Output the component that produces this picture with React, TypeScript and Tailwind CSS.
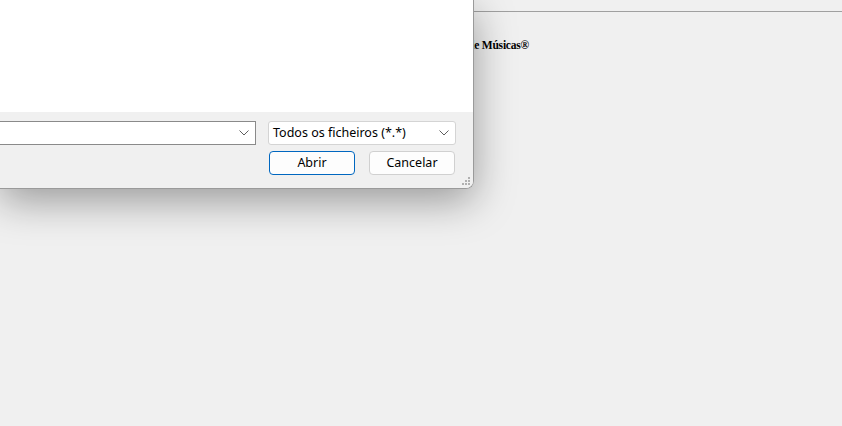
import React from 'react';

const Chevron: React.FC = () => (
  <svg width="10" height="6" viewBox="0 0 10 6" fill="none" className="text-[#5f5f5f]">
    <path d="M0.5 0.5L5 5L9.5 0.5" stroke="currentColor" strokeWidth="1" />
  </svg>
);

const Grip: React.FC = () => (
  <svg width="10" height="10" viewBox="0 0 10 10" className="text-[#b0b0b0]">
    <rect x="7" y="1" width="2" height="2" fill="currentColor" />
    <rect x="4" y="4" width="2" height="2" fill="currentColor" />
    <rect x="7" y="4" width="2" height="2" fill="currentColor" />
    <rect x="1" y="7" width="2" height="2" fill="currentColor" />
    <rect x="4" y="7" width="2" height="2" fill="currentColor" />
    <rect x="7" y="7" width="2" height="2" fill="currentColor" />
  </svg>
);

export default function App() {
  return (
    <div className="relative w-[842px] h-[426px] overflow-hidden bg-[#f0f0f0]">
      {/* page behind the dialog */}
      <div className="flex flex-col">
        <div className="h-[12px] border-b border-[#a0a0a0]" />
        <div className="flex justify-end w-[529px] pt-[26px]">
          <span className="font-['Liberation_Serif',serif] font-bold text-[11.5px] leading-[15px] tracking-[-0.2px] text-black">
            Gestor de Músicas®
          </span>
        </div>
      </div>

      {/* open file dialog */}
      <div className="absolute left-0 top-0 w-[474px] h-[189px] flex flex-col rounded-br-[8px] overflow-hidden border-r border-b border-[#9a9a9a] shadow-[0_12px_40px_rgba(0,0,0,0.36)] font-['Noto_Sans',sans-serif] text-[12px] text-black">
        <div className="h-[112px] bg-white" />
        <div className="flex-1 bg-[#f0f0f0] flex flex-col pt-[9px] pr-[17px]">
          <div className="flex items-center h-[24px]">
            <div className="w-[256px] h-[24px] bg-white border border-[#8a8a8a] border-l-0 flex items-center justify-end pr-[6px]">
              <Chevron />
            </div>
            <div className="ml-[12px] w-[188px] h-[24px] bg-white border border-[#d4d4d4] rounded-[3px] flex items-center justify-between pl-[4px] pr-[6px]">
              <span className="text-[12.5px] leading-[16px]">Todos os ficheiros (*.*)</span>
              <Chevron />
            </div>
          </div>
          <div className="flex justify-end gap-[14px] mt-[6px] pr-[1px]">
            <button className="w-[86px] h-[24px] bg-[#fdfdfd] border border-[#0067c0] rounded-[4px] text-[12.5px] leading-[16px]">
              Abrir
            </button>
            <button className="w-[86px] h-[24px] bg-[#fdfdfd] border border-[#d0d0d0] rounded-[4px] text-[12.5px] leading-[16px]">
              Cancelar
            </button>
          </div>
          <div className="flex justify-end -mr-[15px] mt-[1px]">
            <Grip />
          </div>
        </div>
      </div>
    </div>
  );
}
